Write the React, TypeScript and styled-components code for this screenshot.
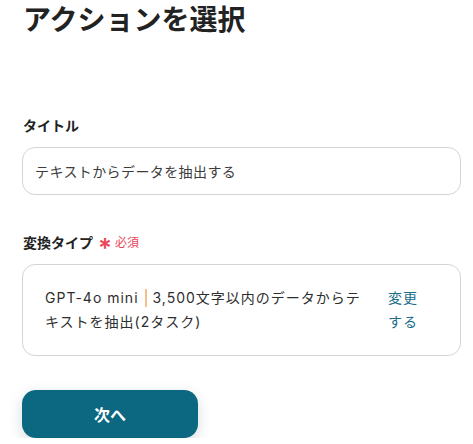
import React from "react";
import styled, { createGlobalStyle } from "styled-components";

const GlobalStyle = createGlobalStyle`
  body {
    margin: 0;
    background: #ffffff;
    font-family: Inter, "Noto Sans CJK JP", "Noto Sans", sans-serif;
    color: #2a2a2a;
  }
`;

const App = () => {
  return (
    <Page>
      <GlobalStyle />
      <Title>アクションを選択</Title>

      <Field>
        <Label>タイトル</Label>
        <TextBox>テキストからデータを抽出する</TextBox>
      </Field>

      <Field>
        <Label>
          変換タイプ
          <Required>
            <Star>*</Star>必須
          </Required>
        </Label>
        <SelectBox>
          <SelectText>
            GPT-4o mini<Divider />3,500文字以内のデータからテキストを抽出(2タスク)
          </SelectText>
          <ChangeLink>変更する</ChangeLink>
        </SelectBox>
      </Field>

      <NextButton type="button">次へ</NextButton>
    </Page>
  );
};

const Page = styled.div`
  display: flex;
  flex-direction: column;
  align-items: flex-start;
  padding: 0 12px 0 22px;
`;

const Title = styled.h1`
  margin: 0 0 76px 1px;
  font-size: 28px;
  line-height: 40px;
  font-weight: 700;
  color: #222;
`;

const Field = styled.div`
  display: flex;
  flex-direction: column;
  align-self: stretch;
  margin-bottom: 38px;
`;

const Label = styled.div`
  display: flex;
  align-items: center;
  height: 20px;
  margin: 0 0 11px 1px;
  font-size: 14px;
  line-height: 20px;
  font-weight: 700;
  color: #222;
`;

const Required = styled.span`
  display: inline-flex;
  align-items: center;
  margin-left: 5px;
  font-size: 12px;
  font-weight: 400;
  color: #e8475a;
`;

const Star = styled.span`
  font-size: 26px;
  font-weight: 600;
  line-height: 12px;
  margin-right: 3px;
  transform: translateY(5px);
`;

const TextBox = styled.div`
  height: 48px;
  box-sizing: border-box;
  display: flex;
  align-items: center;
  padding: 0 12px;
  border: 1px solid #d3d4d8;
  border-radius: 13px;
  font-size: 14px;
  letter-spacing: 0.4px;
  color: #3c3c3c;
`;

const SelectBox = styled.div`
  display: flex;
  align-items: flex-start;
  gap: 19px;
  padding: 21px 42px 21px 22px;
  border: 1px solid #d3d4d8;
  border-radius: 13px;
`;

const SelectText = styled.div`
  flex: 1;
  font-size: 14px;
  letter-spacing: 1px;
  line-height: 24px;
  color: #2e2e2e;
`;

const Divider = styled.span`
  display: inline-block;
  width: 2px;
  height: 18px;
  margin: 0 6px 0 6px;
  vertical-align: -4px;
  background: #f5c089;
`;

const ChangeLink = styled.span`
  width: 30px;
  font-size: 14px;
  letter-spacing: 1px;
  line-height: 24px;
  color: #1a6d88;
  cursor: pointer;
`;

const NextButton = styled.button`
  margin-top: -4px;
  width: 176px;
  height: 48px;
  border: 0;
  border-radius: 14px;
  background: #0b6880;
  color: #fff;
  font-family: inherit;
  font-size: 16px;
  font-weight: 700;
  box-shadow: 0 4px 14px rgba(30, 60, 80, 0.18);
  cursor: pointer;
`;

export default App;
